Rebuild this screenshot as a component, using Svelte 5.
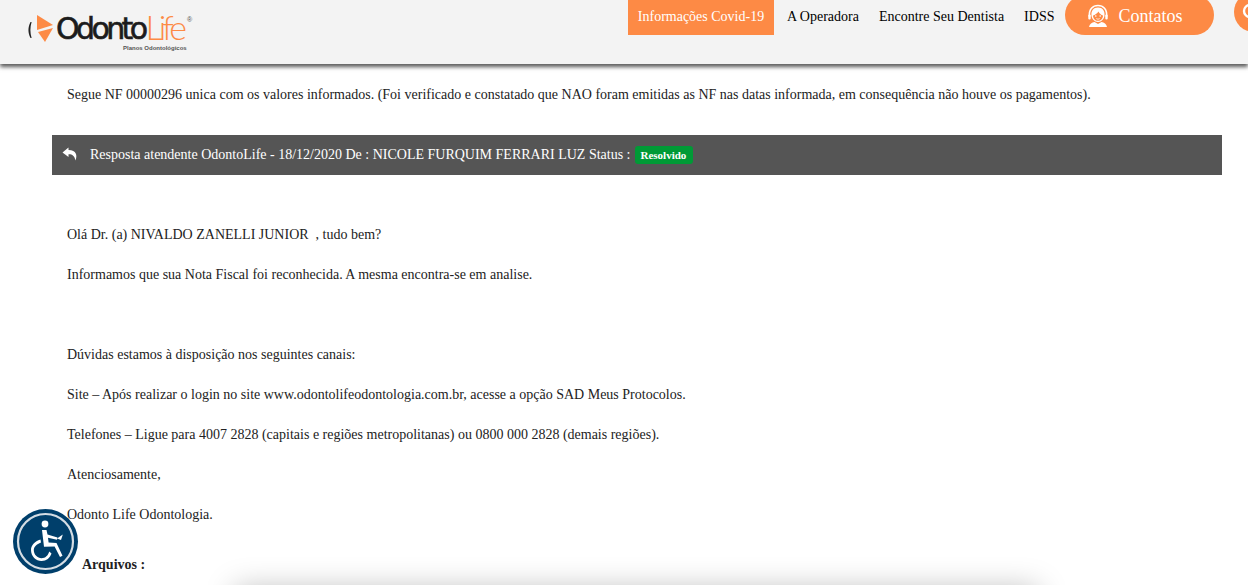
<script>
    // header links
    const links = ["A Operadora", "Encontre Seu Dentista", "IDSS"];

    // message lines, each one is a 40px row
    const replyLines = [
        "Olá Dr. (a) NIVALDO ZANELLI JUNIOR  , tudo bem?",
        "Informamos que sua Nota Fiscal foi reconhecida. A mesma encontra-se em analise.",
        "",
        "Dúvidas estamos à disposição nos seguintes canais:",
        "Site – Após realizar o login no site www.odontolifeodontologia.com.br, acesse a opção SAD Meus Protocolos.",
        "Telefones – Ligue para 4007 2828 (capitais e regiões metropolitanas) ou 0800 000 2828 (demais regiões).",
        "Atenciosamente,",
        "Odonto Life Odontologia.",
    ];
</script>

<div class="page">
    <header>
        <a href="/" class="logo">
            <svg class="logo-mark" width="30" height="30" viewBox="0 0 30 30">
                <path d="M3.5 8 C0.8 13 0.8 19 3.5 24 L4.6 24 C3 19 3 13 4.6 8 Z" fill="#222" />
                <path d="M10 1 L26 11 L10 16 Z" fill="#fd8a45" />
                <path d="M11 18 L26 14 L18 28 Z" fill="#fd8a45" />
            </svg>
            <div class="logo-text">
                <div class="logo-name"><span class="odonto">Odonto</span><span class="life">Life</span><span class="reg">®</span></div>
                <div class="logo-sub">Planos Odontológicos</div>
            </div>
        </a>

        <nav>
            <a href="/" class="covid">Informações Covid-19</a>
            {#each links as link}
                <a href="/" class="link">{link}</a>
            {/each}
            <a href="/" class="contatos">
                <svg width="24" height="24" viewBox="0 0 24 24">
                    <path d="M3.5 13 C2.5 5 7 1.5 12 1.5 C17 1.5 21.5 5 20.5 13" fill="none" stroke="#fff" stroke-width="1.6" />
                    <path d="M12 3.5 C7.5 3.5 5 7 5.5 11.5 C5.8 15 8.5 18 12 18 C15.5 18 18.2 15 18.5 11.5 C19 7 16.5 3.5 12 3.5 Z" fill="#fff" />
                    <path d="M7 11.5 C9 11 11 9.5 12.5 7.5 C13.5 9.5 15 11 17 11.5 C17 14.5 15 16.8 12 16.8 C9 16.8 7 14.5 7 11.5 Z" fill="#fd8a45" />
                    <circle cx="9.8" cy="12" r="0.8" fill="#fff" />
                    <circle cx="14.2" cy="12" r="0.8" fill="#fff" />
                    <path d="M10.3 14.6 C11.2 15.3 12.8 15.3 13.7 14.6" fill="none" stroke="#fff" stroke-width="0.8" />
                    <path d="M3 23 C3.5 20 6 18.5 8.5 18 L12 20 L15.5 18 C18 18.5 20.5 20 21 23 Z" fill="#fff" />
                    <rect x="2.3" y="10.5" width="2.4" height="5" rx="1" fill="#fff" />
                    <rect x="19.3" y="10.5" width="2.4" height="5" rx="1" fill="#fff" />
                </svg>
                Contatos
            </a>
            <span class="search">
                <svg width="20" height="20" viewBox="0 0 20 20">
                    <circle cx="10" cy="9" r="6" fill="none" stroke="#fff" stroke-width="2.4" />
                </svg>
            </span>
        </nav>
    </header>

    <main>
        <p class="nf">Segue NF 00000296 unica com os valores informados. (Foi verificado e constatado que NAO foram emitidas as NF nas datas informada, em consequência não houve os pagamentos).</p>

        <div class="reply-bar">
            <svg class="reply-icon" width="16" height="14" viewBox="0 0 16 14">
                <path d="M6.5 0.5 L0.5 5.5 L6.5 10 L6.5 7.2 C10 7 12.5 8.5 13.5 13.5 C15.5 8.5 14.5 3.2 6.5 3 Z" fill="#fff" />
            </svg>
            <span>Resposta atendente OdontoLife - 18/12/2020 De : NICOLE FURQUIM FERRARI LUZ Status :</span>
            <span class="badge">Resolvido</span>
        </div>

        <div class="reply-body">
            {#each replyLines as line}
                <p>{line}</p>
            {/each}
        </div>

        <p class="files">Arquivos :</p>
    </main>

    <div class="bottom-shadow"></div>

    <button class="a11y" aria-label="Acessibilidade">
        <svg width="66" height="66" viewBox="0 0 66 66">
            <circle cx="32.5" cy="32.5" r="32.5" fill="#003f6b" />
            <circle cx="32.5" cy="32.5" r="27.5" fill="none" stroke="#d4dde4" stroke-width="2.2" />
            <circle cx="32" cy="15" r="3.4" fill="#fff" />
            <path d="M29 21 L33.5 21 L34.5 25.5 L44.5 28.6 L44 30.8 L35 28.8 L35.6 33.5 L43.5 34 L49.5 46.8 L47 48 L41.6 37.6 L31 37.8 Z" fill="#fff" />
            <path d="M44 29.5 L49.8 25.5 L48 31 Z" fill="#fff" />
            <path d="M27.5 30.5 C21.5 32.5 18 36.5 18 41 C18 47.5 23 52 28.5 52 C33.5 52 37 49 38.5 44.5 L36.2 42.5 C35 46.5 32.5 49.2 28.5 49.2 C24.5 49.2 20.8 45.5 20.8 41.2 C20.8 38 23.6 35.2 28 33.6 Z" fill="#fff" />
        </svg>
    </button>
</div>

<style>
    :global(body) {
        margin: 0;
        font-family: "Liberation Serif", "Times New Roman", serif;
        color: #222;
        background-color: #fff;
    }

    .page {
        position: relative;
        height: 585px;
        overflow: hidden;
    }

    /* Header */
    header {
        display: flex;
        justify-content: space-between;
        height: 64px;
        background: #f3f3f3;
        box-shadow: 0 3px 4px rgba(0, 0, 0, 0.65);
    }

    .logo {
        display: flex;
        align-items: flex-start;
        margin: 13px 0 0 27px;
        text-decoration: none;
    }

    .logo-mark {
        margin-top: 1px;
        margin-right: -1px;
    }

    .logo-text {
        width: 130px;
    }

    .logo-name {
        display: flex;
        height: 32px;
        line-height: 32px;
        white-space: nowrap;
    }

    .odonto {
        font-family: "DejaVu Sans", Arial, sans-serif;
        font-size: 30px;
        letter-spacing: -3.6px;
        color: #1c1c1c;
        -webkit-text-stroke: 0.6px #1c1c1c;
    }

    .life {
        font-family: Lato, "Liberation Sans", sans-serif;
        font-size: 34px;
        font-weight: 300;
        letter-spacing: -4px;
        color: #fd8a45;
        margin-left: 1px;
        margin-top: -2px;
    }

    .reg {
        font-family: "Liberation Sans", Arial, sans-serif;
        font-size: 7px;
        line-height: 12px;
        color: #555;
        margin-top: 1px;
        margin-left: 4px;
    }

    .logo-sub {
        font-family: "Liberation Sans", Arial, sans-serif;
        font-size: 6px;
        font-weight: 700;
        color: #555;
        margin: 0 0 0 67px;
        white-space: nowrap;
    }

    nav {
        display: flex;
        align-items: flex-start;
        width: 620px;
        flex-shrink: 0;
    }

    nav a {
        text-decoration: none;
        flex-shrink: 0;
    }

    .covid {
        width: 146px;
        height: 35px;
        background: #fd8a45;
        color: #fff;
        font-size: 14px;
        line-height: 33px;
        text-align: center;
        white-space: nowrap;
    }

    .link {
        color: #000;
        font-size: 14px;
        line-height: 33px;
        margin-left: 13px;
        margin-right: 7px;
        white-space: nowrap;
    }

    .contatos {
        display: flex;
        align-items: center;
        gap: 8px;
        width: 149px;
        height: 40px;
        margin-top: -5px;
        margin-left: 4px;
        padding-left: 21px;
        padding-top: 2px;
        box-sizing: border-box;
        background: #fd8a45;
        border-radius: 20px;
        color: #fff;
        font-size: 18px;
    }

    .contatos svg {
        flex-shrink: 0;
    }

    .search {
        display: flex;
        align-items: center;
        width: 40px;
        height: 40px;
        margin-top: -8px;
        margin-left: 20px;
        padding-left: 6px;
        box-sizing: border-box;
        border-radius: 50%;
        background: #fd8a45;
        flex-shrink: 0;
    }

    /* Message */
    main {
        padding: 0 26px 0 52px;
        font-size: 14px;
        line-height: 20px;
    }

    p {
        margin: 0;
    }

    .nf {
        margin-top: 21px;
        padding-left: 15px;
        white-space: nowrap;
    }

    .reply-bar {
        display: flex;
        align-items: center;
        height: 40px;
        margin-top: 30px;
        padding-left: 10px;
        background: #555;
        color: #fff;
    }

    .reply-icon {
        margin-right: 12px;
        margin-top: -3px;
    }

    .badge {
        margin-left: 4px;
        padding: 0 7px 0 6px;
        height: 18px;
        line-height: 18px;
        background: #009a36;
        border-radius: 3px;
        font-size: 11px;
        font-weight: 700;
    }

    .reply-body {
        margin-top: 50px;
        padding-left: 15px;
    }

    .reply-body p {
        height: 20px;
        margin-bottom: 20px;
        white-space: pre-wrap;
    }

    .reply-body p:last-child {
        margin-bottom: 30px;
    }

    .files {
        padding-left: 30px;
        font-weight: 700;
    }

    /* shadow of something just below the fold */
    .bottom-shadow {
        position: absolute;
        left: 235px;
        right: 210px;
        top: 588px;
        height: 60px;
        box-shadow: 0 0 30px rgba(0, 0, 0, 0.25);
    }

    .a11y {
        position: absolute;
        left: 13px;
        top: 509px;
        width: 66px;
        height: 66px;
        padding: 0;
        border: 0;
        background: none;
    }
</style>
